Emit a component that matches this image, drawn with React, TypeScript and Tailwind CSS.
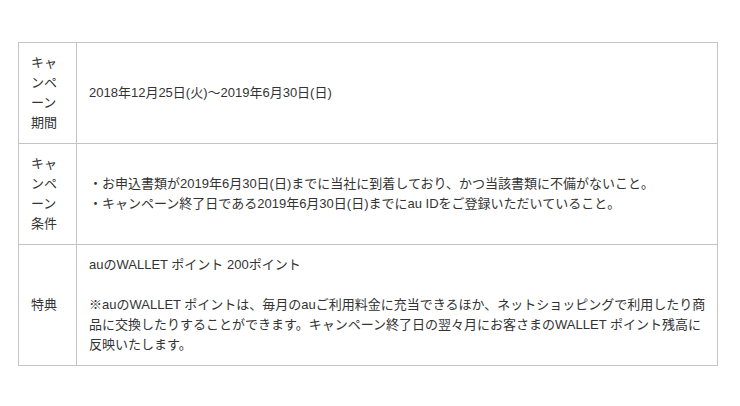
const font = {
  fontFamily: '"Liberation Sans", "Noto Sans CJK JP", sans-serif',
};

export default function App() {
  return (
    <div className="w-[740px] h-[406px] bg-white pt-[42px] pl-[18px]" style={font}>
      <table className="w-[700px] border-collapse text-[13px] leading-[20px] text-[#333]">
        <tbody>
          <tr>
            <th className="w-[58px] border border-[#c4c4c4] px-3 py-[10px] text-left font-normal align-middle">
              キャンペーン期間
            </th>
            <td className="border border-[#c4c4c4] pl-3 pr-[4px] py-[10px] align-middle">
              2018年12月25日(火)〜2019年6月30日(日)
            </td>
          </tr>
          <tr>
            <th className="w-[58px] border border-[#c4c4c4] px-3 py-[10px] text-left font-normal align-middle">
              キャンペーン条件
            </th>
            <td className="border border-[#c4c4c4] pl-3 pr-[4px] py-[10px] align-middle">
              <p>・お申込書類が2019年6月30日(日)までに当社に到着しており、かつ当該書類に不備がないこと。</p>
              <p>・キャンペーン終了日である2019年6月30日(日)までにau IDをご登録いただいていること。</p>
            </td>
          </tr>
          <tr>
            <th className="w-[58px] border border-[#c4c4c4] px-3 py-[10px] text-left font-normal align-middle">
              特典
            </th>
            <td className="border border-[#c4c4c4] pl-3 pr-[4px] py-[10px] align-middle">
              <p>auのWALLET ポイント 200ポイント</p>
              <p className="mt-5">
                ※auのWALLET ポイントは、毎月のauご利用料金に充当できるほか、ネットショッピングで利用したり商品に交換したりすることができます。キャンペーン終了日の翌々月にお客さまのWALLET ポイント残高に反映いたします。
              </p>
            </td>
          </tr>
        </tbody>
      </table>
    </div>
  );
}
